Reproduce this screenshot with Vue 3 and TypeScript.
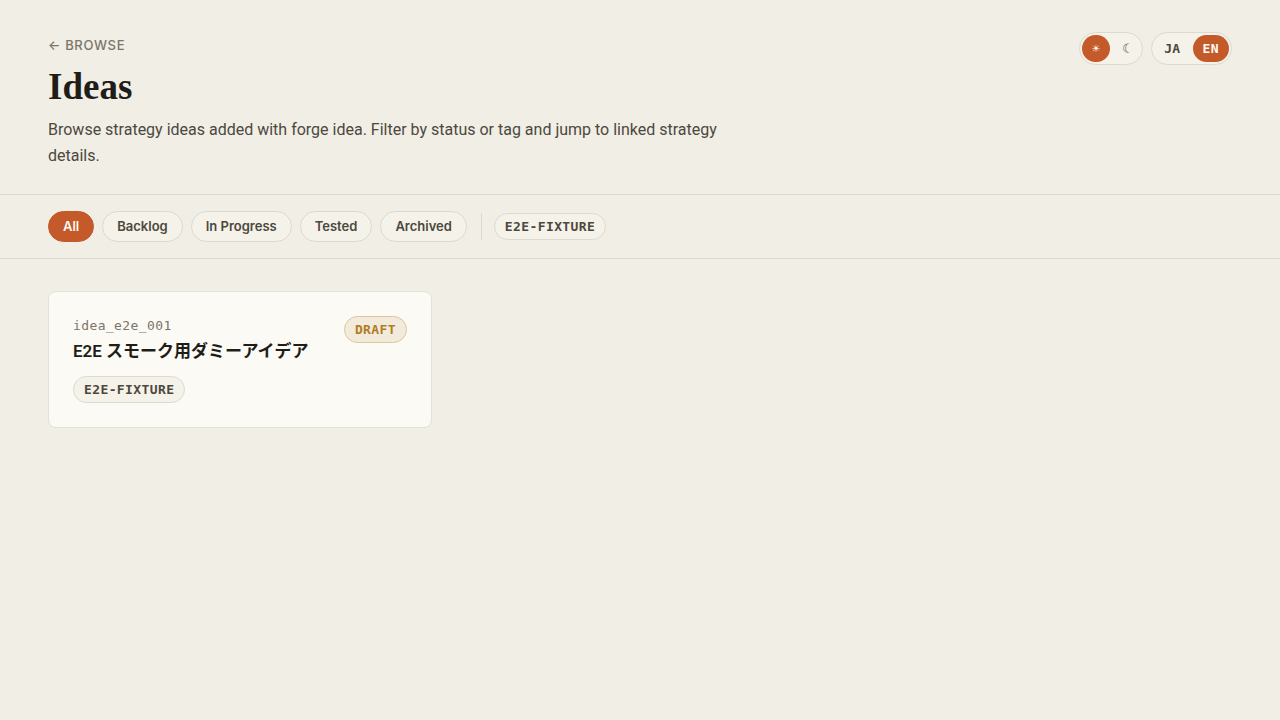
<script setup lang="ts">
import { computed, ref } from 'vue'

interface Filter {
  id: string
  label: string
}

interface Idea {
  id: string
  title: string
  status: string
  tags: string[]
}

const filters: Filter[] = [
  { id: 'all', label: 'All' },
  { id: 'backlog', label: 'Backlog' },
  { id: 'in_progress', label: 'In Progress' },
  { id: 'tested', label: 'Tested' },
  { id: 'archived', label: 'Archived' },
]

const ideas: Idea[] = [
  { id: 'idea_e2e_001', title: 'E2E スモーク用ダミーアイデア', status: 'draft', tags: ['e2e-fixture'] },
]

const status = ref('all')
const activeTag = ref<string | null>(null)
const theme = ref<'light' | 'dark'>('light')
const lang = ref<'ja' | 'en'>('en')

const tags = computed(() => [...new Set(ideas.flatMap((idea) => idea.tags))])
const visibleIdeas = computed(() =>
  ideas.filter(
    (idea) =>
      (status.value === 'all' || idea.status === status.value) &&
      (activeTag.value === null || idea.tags.includes(activeTag.value)),
  ),
)

function toggleTag(tag: string) {
  activeTag.value = activeTag.value === tag ? null : tag
}
</script>

<template>
  <div class="page">
    <header class="header">
      <div class="intro">
        <a class="back" href="#browse">← Browse</a>
        <h1 class="title">Ideas</h1>
        <p class="lead">
          Browse strategy ideas added with forge idea. Filter by status or tag and jump to linked
          strategy details.
        </p>
      </div>
      <div class="controls">
        <div class="switch" role="group" aria-label="Theme">
          <button
            type="button"
            class="option icon"
            :class="{ active: theme === 'light' }"
            aria-label="Light"
            @click="theme = 'light'"
          >
            ☀
          </button>
          <button
            type="button"
            class="option icon"
            :class="{ active: theme === 'dark' }"
            aria-label="Dark"
            @click="theme = 'dark'"
          >
            ☾
          </button>
        </div>
        <div class="switch" role="group" aria-label="Language">
          <button type="button" class="option" :class="{ active: lang === 'ja' }" @click="lang = 'ja'">
            JA
          </button>
          <button type="button" class="option" :class="{ active: lang === 'en' }" @click="lang = 'en'">
            EN
          </button>
        </div>
      </div>
    </header>

    <nav class="filters" aria-label="Filters">
      <button
        v-for="filter in filters"
        :key="filter.id"
        type="button"
        class="chip"
        :class="{ active: status === filter.id }"
        @click="status = filter.id"
      >
        {{ filter.label }}
      </button>
      <div class="tags">
        <button
          v-for="tag in tags"
          :key="tag"
          type="button"
          class="badge"
          :class="{ selected: activeTag === tag }"
          @click="toggleTag(tag)"
        >
          {{ tag }}
        </button>
      </div>
    </nav>

    <main class="grid">
      <article v-for="idea in visibleIdeas" :key="idea.id" class="card">
        <div class="card-head">
          <div>
            <div class="idea-id">{{ idea.id }}</div>
            <h2 class="idea-title">{{ idea.title }}</h2>
          </div>
          <span class="badge draft">{{ idea.status }}</span>
        </div>
        <div class="card-tags">
          <span v-for="tag in idea.tags" :key="tag" class="badge">{{ tag }}</span>
        </div>
      </article>
    </main>
  </div>
</template>

<style>
body {
  background: #f1eee6;
}
</style>

<style scoped>
.page {
  --accent: #c45a2a;
  --line: #dcd9d1;
  --surface: #f5f2e9;
  --text: #1f1d18;
  --text-mid: #4c483e;
  --text-soft: #7b756a;
  --mono: 'DejaVu Sans Mono', 'Liberation Mono', monospace;
  min-height: 100vh;
  color: var(--text);
  font-family: Roboto, Inter, 'Noto Sans CJK JP', sans-serif;
  font-size: 16px;
}

.page * {
  box-sizing: border-box;
}

button {
  margin: 0;
  font-family: inherit;
  cursor: pointer;
}

.header {
  display: flex;
  justify-content: space-between;
  align-items: flex-start;
  gap: 24px;
  padding: 32px 48px 25px;
  border-bottom: 1px solid var(--line);
}

.intro {
  max-width: 720px;
}

.back {
  display: block;
  color: var(--text-soft);
  font-family: Inter, sans-serif;
  font-size: 13px;
  font-weight: 500;
  line-height: 26px;
  letter-spacing: 0.05em;
  text-transform: uppercase;
  text-decoration: none;
}

.title {
  margin: 8px 0 10px;
  font-family: 'Liberation Serif', serif;
  font-size: 37px;
  font-weight: 700;
  line-height: 41px;
}

.lead {
  margin: 0;
  color: var(--text-mid);
  font-size: 16px;
  line-height: 26px;
}

.controls {
  display: flex;
  gap: 8px;
}

.switch {
  display: flex;
  padding: 2px;
  border: 1px solid var(--line);
  border-radius: 999px;
  background: var(--surface);
}

.option {
  min-width: 36px;
  height: 27px;
  padding: 0 10px;
  border: 0;
  border-radius: 999px;
  background: transparent;
  color: var(--text-mid);
  font-family: var(--mono);
  font-size: 13px;
  font-weight: 700;
  letter-spacing: 0.03em;
}

.option.icon {
  min-width: 28px;
  padding: 0;
  font-weight: 400;
  letter-spacing: normal;
}

.option + .option {
  margin-left: 2px;
}

.option.active {
  background: var(--accent);
  color: #fcfaf5;
}

.filters {
  display: flex;
  flex-wrap: wrap;
  align-items: center;
  gap: 8px;
  padding: 16px 48px;
  border-bottom: 1px solid var(--line);
}

.chip {
  height: 31px;
  padding: 0 14px 1px;
  border: 1px solid var(--line);
  border-radius: 999px;
  background: var(--surface);
  color: var(--text-mid);
  font-family: Inter, sans-serif;
  font-size: 13px;
  font-weight: 600;
}

.chip.active {
  border-color: var(--accent);
  background: var(--accent);
  color: #fcfaf5;
}

.tags {
  display: flex;
  gap: 8px;
  margin-left: 6px;
  padding-left: 12px;
  border-left: 1px solid var(--line);
}

.badge {
  flex: none;
  height: 27px;
  padding: 0 10px;
  border: 1px solid var(--line);
  border-radius: 999px;
  background: var(--surface);
  color: var(--text-mid);
  font-family: var(--mono);
  font-size: 13px;
  font-weight: 700;
  line-height: 25px;
  letter-spacing: 0.03em;
  text-transform: uppercase;
}

.badge.selected {
  border-color: var(--accent);
}

.badge.draft {
  border-color: #dfc59a;
  background: #f2eadb;
  color: #b17d23;
}

.grid {
  display: grid;
  grid-template-columns: repeat(auto-fill, minmax(320px, 1fr));
  gap: 16px;
  padding: 32px 48px;
}

.card {
  padding: 24px;
  border: 1px solid #e3e1da;
  border-radius: 8px;
  background: #fcfaf5;
}

.card-head {
  display: flex;
  justify-content: space-between;
  align-items: flex-start;
  gap: 12px;
}

.idea-id {
  color: var(--text-soft);
  font-family: var(--mono);
  font-size: 13px;
  line-height: 20px;
  letter-spacing: 0.03em;
}

.idea-title {
  margin: 2px 0 0;
  font-size: 17px;
  font-weight: 600;
  line-height: 26px;
}

.card-tags {
  display: flex;
  gap: 8px;
  margin-top: 12px;
}
</style>
